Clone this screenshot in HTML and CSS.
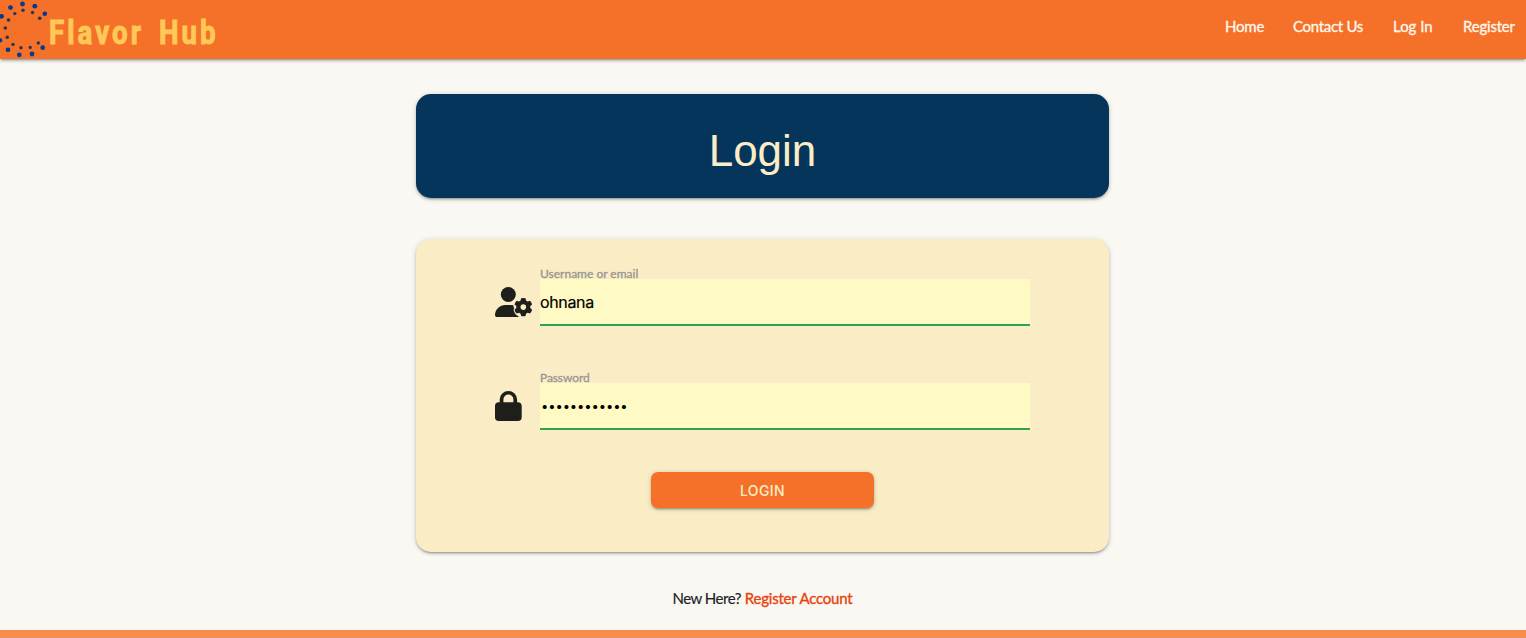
FILE: index.html
```html
<!DOCTYPE html>
<html lang="en">
<head>
<meta charset="utf-8">
<title>Flavor Hub</title>
<link rel="stylesheet" href="styles.css">
</head>
<body>
<header class="nav">
  <a class="brand">
    <svg class="brand-mark" width="49" height="59" viewBox="0 0 49 59">
      <g fill="#063a8f"><circle cx="22.5" cy="4" r="2.4"/><circle cx="34.8" cy="6.2" r="2.4"/><circle cx="44.8" cy="13.8" r="2.3"/><circle cx="10.5" cy="7.6" r="2.4"/><circle cx="1.6" cy="16.3" r="2.4"/><circle cx="0" cy="40.2" r="2.3"/><circle cx="8" cy="49.8" r="2.4"/><circle cx="19.3" cy="54.8" r="2.4"/><circle cx="32" cy="54" r="2.4"/><circle cx="42.7" cy="47.7" r="2.4"/></g>
      <g fill="#27364c"><circle cx="23" cy="10.3" r="1.7"/><circle cx="32.5" cy="12.5" r="1.7"/><circle cx="39.7" cy="18.2" r="1.8"/><circle cx="14.8" cy="13.6" r="1.7"/><circle cx="8.5" cy="20" r="1.8"/><circle cx="5.3" cy="28" r="1.8"/><circle cx="7.2" cy="37.2" r="1.8"/><circle cx="13" cy="44.4" r="1.7"/><circle cx="21" cy="47.8" r="1.7"/><circle cx="30.2" cy="47.4" r="1.7"/><circle cx="38.3" cy="43" r="1.7"/></g>
    </svg>
    <span class="brand-name">Flavor Hub</span>
  </a>
  <nav class="links"><a class="home">Home</a><a class="contact">Contact Us</a><a class="log">Log In</a><a class="reg">Register</a></nav>
</header>
<main class="page">
  <h1 class="title card">Login</h1>
  <form class="form card">
    <div class="field">
      <svg class="icon" width="38" height="30" viewBox="0 0 38 30" fill="#1e1f1b">
        <circle cx="13.3" cy="7.5" r="7.5"/>
        <path d="M10.5 17.9h5.6q1.200 0 2.400.3c-.3 1.200 0 2.200 1 2.900-.9.8-1.100 1.700-.6 3 .8 2.300 1.800 3.700 3.100 4.500.6.300 1 .4 1.500.4v1H1.700Q0 30 0 28.200C0 22.500 4.700 17.900 10.500 17.900z"/>
        <path fill-rule="evenodd" d="M26.100 11.200q2.200-.6 4.400 0l.5 2.300 1.600.9 2.300-.7q1.700 1.600 2.200 3.800l-1.800 1.600v2l1.800 1.600q-.5 2.200-2.200 3.800l-2.300-.7-1.600.9-.5 2.300q-2.200.6-4.400 0l-.5-2.300-1.600-.9-2.300.7q-1.700-1.600-2.200-3.800l1.800-1.600v-2l-1.800-1.600q.5-2.200 2.200-3.800l2.300.7 1.600-.9zM28.300 17.300a2.800 2.800 0 1 0 0 5.600 2.800 2.800 0 1 0 0-5.600z"/>
      </svg>
      <div class="control"><label class="label-user">Username or email</label><input class="input" type="text" value="ohnana"></div>
    </div>
    <div class="field">
      <svg class="icon" width="38" height="30" viewBox="0 0 38 30" fill="#1e1f1b"><path fill-rule="evenodd" d="M8.400 11.200V8.500a5 5 0 0 1 10 0v2.700zM4.700 11.200V8.500a8.700 8.500 0 0 1 17.400 0v2.700h.8q3.800 0 3.800 3.800v11.200q0 3.800-3.800 3.800H3.800Q0 30 0 26.200V15q0-3.800 3.800-3.800z"/></svg>
      <div class="control"><label class="label-pass">Password</label><input class="input password" type="password" value="abcdefghijkl"></div>
    </div>
    <button class="submit" type="button">LOGIN</button>
  </form>
  <p class="signup"><span class="new">New Here?</span> <a class="account">Register Account</a></p>
</main>
<footer class="footer"></footer>
</body>
</html>
```
FILE: styles.css
```css
* { box-sizing: border-box; }
body { margin: 0; height: 638px; overflow: hidden; background: #faf8f3; font-family: Lato, sans-serif; display: flex; flex-direction: column; }
.nav { height: 59px; flex: none; background: #f57129; display: flex; justify-content: space-between; box-shadow: 0 2px 2px 0 rgba(0,0,0,.14), 0 3px 1px -2px rgba(0,0,0,.12), 0 1px 5px 0 rgba(0,0,0,.2); }
.brand { display: flex; }
.brand-mark { display: block; }
.brand-name { font: 700 33px/40px Roboto, sans-serif; color: #ffc857; letter-spacing: 3.6px; word-spacing: 6px; padding-top: 13px; white-space: nowrap; transform: scaleX(.84); transform-origin: left; -webkit-text-stroke: 1px #ffc857; }
.links { display: flex; padding-right: 11px; font-size: 15px; line-height: 53px; color: #fff8ee; -webkit-text-stroke: .3px; }
.links a { white-space: nowrap; }
.home { width: 68px; letter-spacing: -.2px; }
.contact { width: 100px; letter-spacing: -.3px; }
.log { width: 70px; }
.reg { width: 52px; letter-spacing: -.2px; }
.page { flex: 1; width: 693px; margin: 35px 0 0 416px; }
.card { border-radius: 15px; box-shadow: 0 2px 2px 0 rgba(0,0,0,.14), 0 3px 1px -2px rgba(0,0,0,.12), 0 1px 5px 0 rgba(0,0,0,.2); }
.title { margin: 0; height: 104px; background: #05355b; color: #faedc8; font: 400 44px/113px "Liberation Sans", sans-serif; text-align: center; }
.form { margin-top: 41px; height: 313px; background: #faedc6; padding: 27px 79px 0; }
.field { display: flex; height: 104px; }
.icon { flex: none; margin: 21px 7px 0 0; }
.control { width: 490px; }
.control label { display: block; height: 13px; line-height: 15px; font-size: 12px; color: #969690; -webkit-text-stroke: .3px; }
.label-pass { letter-spacing: -.1px; }
.input { display: block; width: 490px; height: 47px; border: 0; border-bottom: 2px solid #2fa34f; padding: 0; outline: 0; background: #fffac3; color: #000; font: 16px Inter, sans-serif; letter-spacing: -.35px; -webkit-text-stroke: .2px; }
.password { font-size: 13px; letter-spacing: -.1px; -webkit-text-stroke: 0; padding-left: 1px; }
.submit { display: block; width: 223px; height: 36px; margin: -2px auto 0; border: 0; border-radius: 7px; background: #f57129; color: #faedc6; font: 500 14px/34px Inter, sans-serif; letter-spacing: .4px; padding: 2px 0 0; box-shadow: 0 2px 2px 0 rgba(0,0,0,.14), 0 3px 1px -2px rgba(0,0,0,.12), 0 1px 5px 0 rgba(0,0,0,.2); }
.signup { margin: 35px 0 0; font-size: 15px; line-height: 22px; text-align: center; color: #222; }
.new { letter-spacing: -.5px; -webkit-text-stroke: .15px; }
.account { letter-spacing: -.2px; color: #e9430d; -webkit-text-stroke: .35px; }
.footer { height: 8px; flex: none; background: #f78d4b; }
```
